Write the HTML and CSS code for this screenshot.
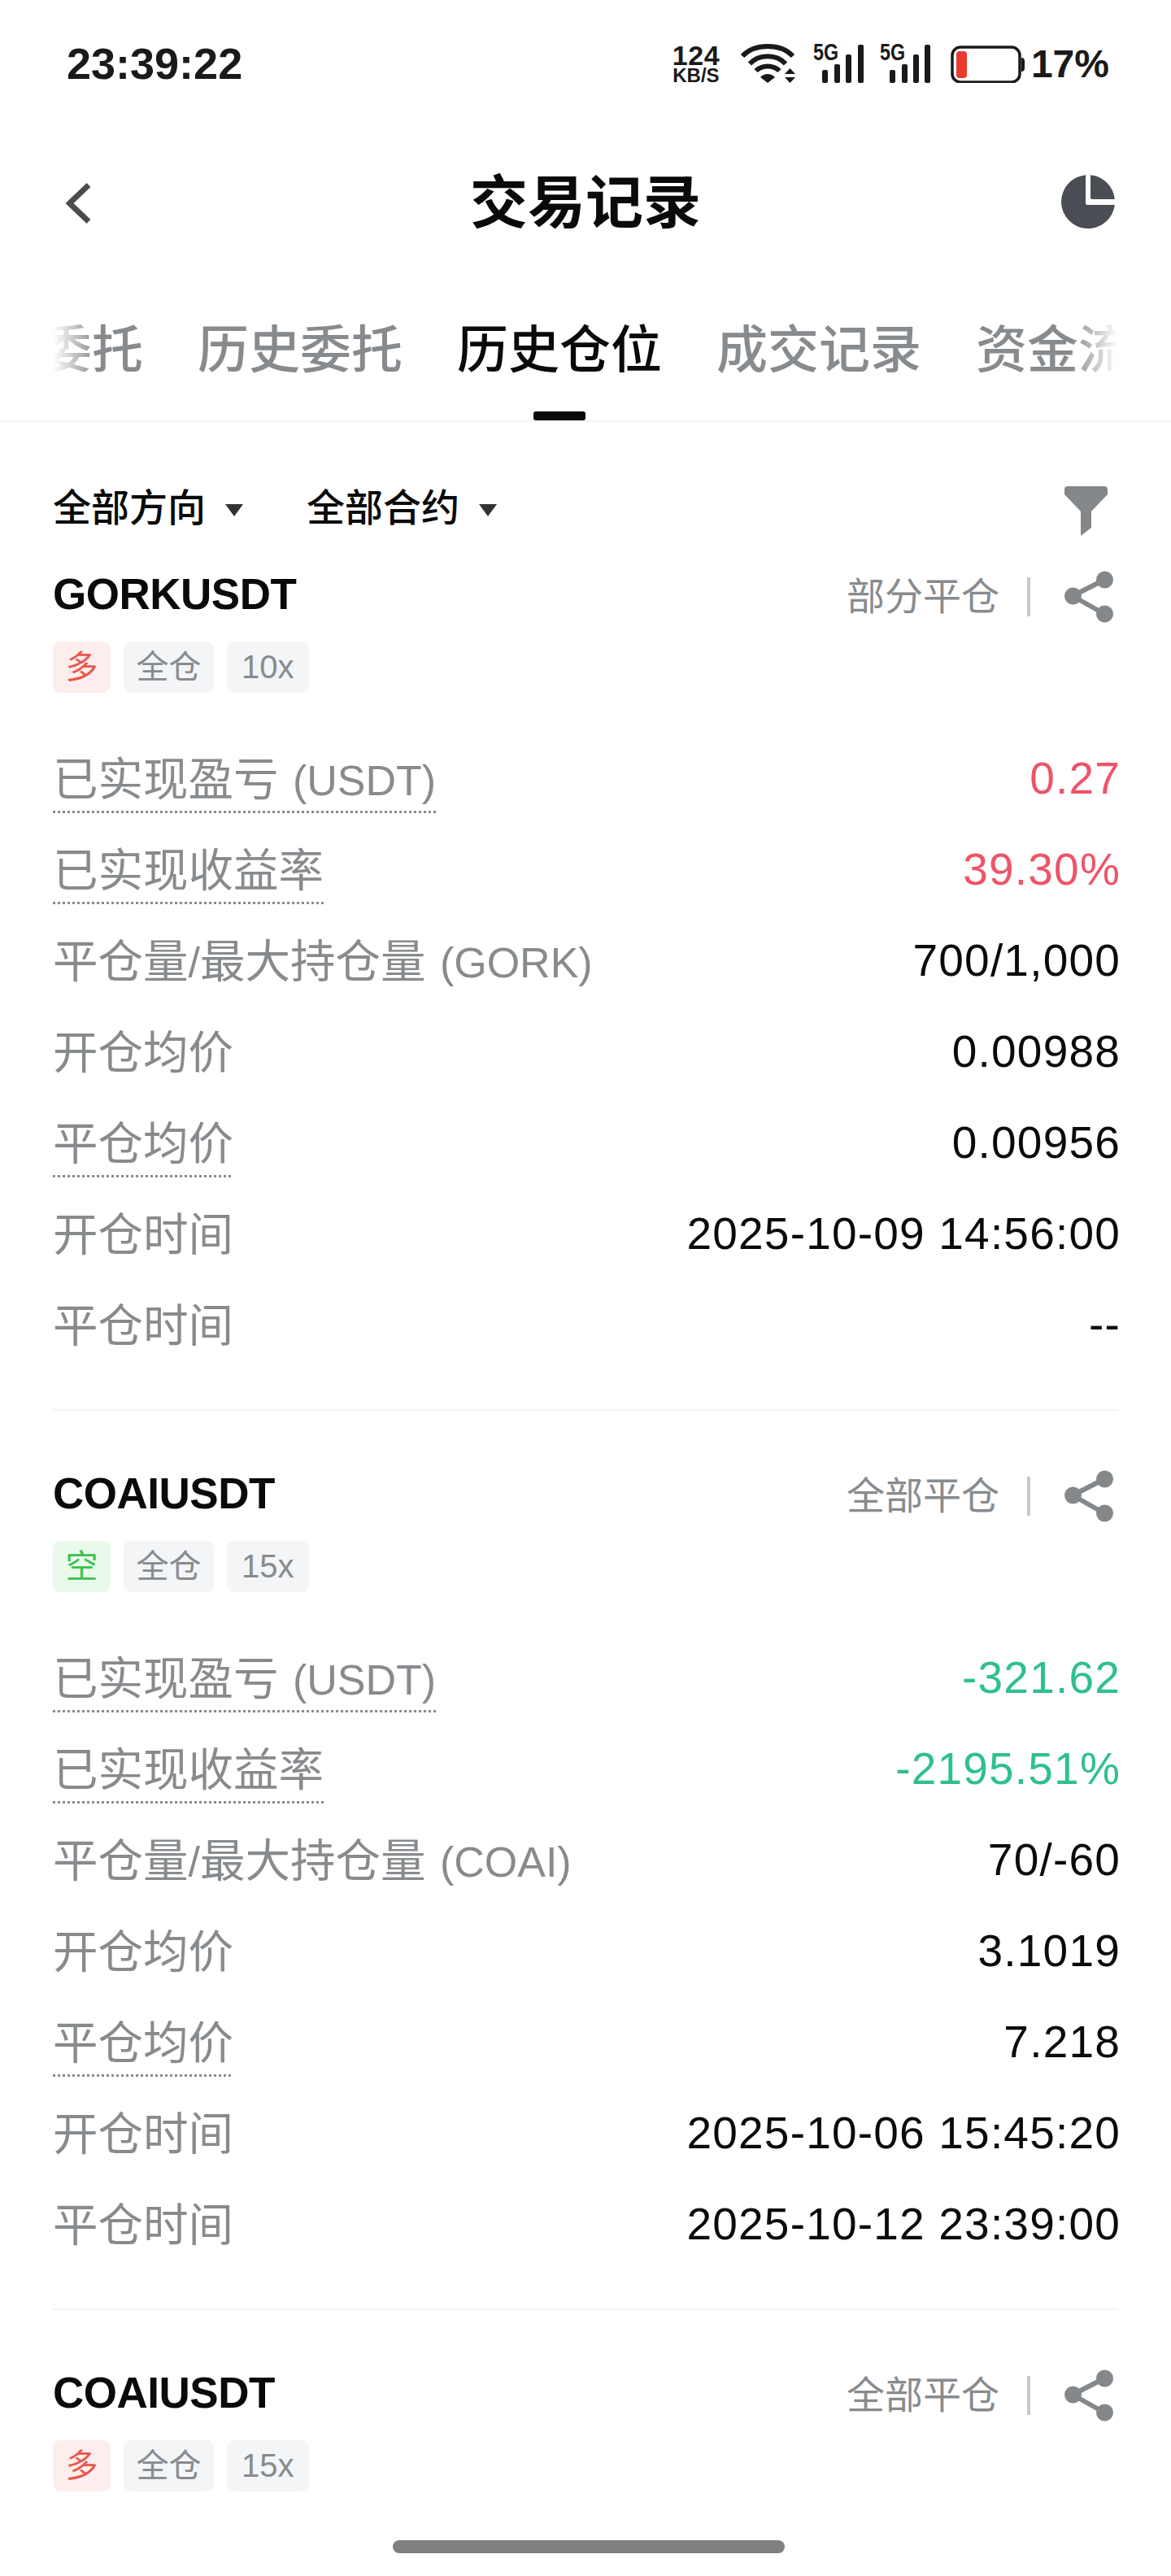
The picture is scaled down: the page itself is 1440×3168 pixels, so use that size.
FILE: index.html
```html
<!DOCTYPE html>
<html>
<head>
    <title>交易记录</title>
    <link rel="stylesheet" href="styles.css">
</head>
<body>
    <div id="page">
        <div class="status-bar">
            <span class="time">23:39:22</span>
            <div class="status-icons">
                <div class="speed"><span class="speed-num">124</span><span class="speed-unit">KB/S</span></div>
                <svg class="wifi" width="72" height="48" viewBox="0 0 72 48">
                    <g fill="none" stroke="#1a1a1a" stroke-width="6">
                        <path d="M6 15C21 -1 53 -1 68 15"/>
                        <path d="M15 24.500C26 12 48 12 59 24.500"/>
                        <path d="M22.500 33C30 25.500 44 25.500 51.500 33"/>
                    </g>
                    <path d="M37 48L28 41C33 35.500 41 35.500 46 41Z" fill="#1a1a1a"/>
                    <path d="M58 37L64.500 30L71 37ZM58 41H71L64.500 48Z" fill="#1a1a1a"/>
                </svg>
                <svg class="signal" width="63" height="56" viewBox="-1 -8 63 56">
                    <text class="net" x="0" y="20" textLength="31" lengthAdjust="spacingAndGlyphs">5G</text>
                    <rect x="11" y="32" width="7" height="16" rx="2"/>
                    <rect x="26" y="25" width="7" height="23" rx="2"/>
                    <rect x="40" y="13" width="7" height="35" rx="2"/>
                    <rect x="55" y="1" width="7" height="47" rx="2"/>
                </svg>
                <svg class="signal" width="63" height="56" viewBox="0 -8 63 56">
                    <text class="net" x="0" y="20" textLength="31" lengthAdjust="spacingAndGlyphs">5G</text>
                    <rect x="12" y="32" width="7" height="16" rx="2"/>
                    <rect x="27" y="25" width="7" height="23" rx="2"/>
                    <rect x="41" y="13" width="7" height="35" rx="2"/>
                    <rect x="55" y="1" width="7" height="47" rx="2"/>
                </svg>
                <svg class="battery" width="95" height="48" viewBox="0 0 95 48">
                    <rect x="6" y="4" width="83" height="43" rx="10" fill="none" stroke="#1a1a1a" stroke-width="3.500"/>
                    <path d="M91 17C94 17 95 19 95 21V30C95 32 94 34 91 34Z" fill="#1a1a1a"/>
                    <rect x="11" y="9" width="13" height="33" rx="4" fill="#ea3a2e"/>
                </svg>
                <span class="percent">17%</span>
            </div>
        </div>

        <div class="nav">
            <svg class="back" width="32" height="52" viewBox="0 0 32 52">
                <path d="M28 3.500L4.500 26L28 48.500" fill="none" stroke="#4a4c50" stroke-width="7"/>
            </svg>
            <h1>交易记录</h1>
            <svg class="pie" width="66" height="66" viewBox="0 0 66 66">
                <path d="M30 .2A33 33 0 1 0 65.800 37H32Q30 37 30 35Z" fill="#4a4d53"/>
                <path d="M36 .2A33 33 0 0 1 65.800 30H38Q36 30 36 28Z" fill="#4a4d53"/>
            </svg>
        </div>

        <div class="tabs">
            <div class="tab-track">
                <div class="tab-list">
                    <div class="tab">当前委托</div>
                    <div class="tab">历史委托</div>
                    <div class="tab active">历史仓位</div>
                    <div class="tab">成交记录</div>
                    <div class="tab">资金流水</div>
                </div>
            </div>
        </div>

        <div class="filters">
            <div class="filter-group">
                <div class="filter">全部方向<i class="caret"></i></div>
                <div class="filter">全部合约<i class="caret"></i></div>
            </div>
            <svg class="funnel" width="53" height="61" viewBox="0 0 53 61">
                <path d="M4 0H49Q53 0 53 4V10L33 31V51L20 61V31L0 10V4Q0 0 4 0Z" fill="#85888b"/>
            </svg>
        </div>

        <!-- 第一条 -->
        <div class="card">
            <div class="card-head">
                <span class="symbol">GORKUSDT</span>
                <div class="card-side">
                    <span class="close-state">部分平仓</span>
                    <i class="side-line"></i>
                    <svg class="share" width="60" height="64" viewBox="0 0 60 64"><use href="#share-icon"/></svg>
                </div>
            </div>
            <div class="tags">
                <span class="tag long">多</span>
                <span class="tag">全仓</span>
                <span class="tag lev">10x</span>
            </div>
            <div class="row"><span class="label tip">已实现盈亏 <span class="unit">(USDT)</span></span><span class="value up">0.27</span></div>
            <div class="row"><span class="label tip">已实现收益率</span><span class="value up">39.30%</span></div>
            <div class="row"><span class="label">平仓量<span class="unit">/</span>最大持仓量 <span class="unit">(GORK)</span></span><span class="value">700/1,000</span></div>
            <div class="row"><span class="label">开仓均价</span><span class="value">0.00988</span></div>
            <div class="row"><span class="label tip">平仓均价</span><span class="value">0.00956</span></div>
            <div class="row"><span class="label">开仓时间</span><span class="value">2025-10-09 14:56:00</span></div>
            <div class="row"><span class="label">平仓时间</span><span class="value">--</span></div>
        </div>

        <!-- 第二条 -->
        <div class="card">
            <div class="card-head">
                <span class="symbol">COAIUSDT</span>
                <div class="card-side">
                    <span class="close-state">全部平仓</span>
                    <i class="side-line"></i>
                    <svg class="share" width="60" height="64" viewBox="0 0 60 64"><use href="#share-icon"/></svg>
                </div>
            </div>
            <div class="tags">
                <span class="tag short">空</span>
                <span class="tag">全仓</span>
                <span class="tag lev">15x</span>
            </div>
            <div class="row"><span class="label tip">已实现盈亏 <span class="unit">(USDT)</span></span><span class="value down">-321.62</span></div>
            <div class="row"><span class="label tip">已实现收益率</span><span class="value down">-2195.51%</span></div>
            <div class="row"><span class="label">平仓量<span class="unit">/</span>最大持仓量 <span class="unit">(COAI)</span></span><span class="value">70/-60</span></div>
            <div class="row"><span class="label">开仓均价</span><span class="value">3.1019</span></div>
            <div class="row"><span class="label tip">平仓均价</span><span class="value">7.218</span></div>
            <div class="row"><span class="label">开仓时间</span><span class="value">2025-10-06 15:45:20</span></div>
            <div class="row"><span class="label">平仓时间</span><span class="value">2025-10-12 23:39:00</span></div>
        </div>

        <!-- 第三条，只露出头部 -->
        <div class="card last">
            <div class="card-head">
                <span class="symbol">COAIUSDT</span>
                <div class="card-side">
                    <span class="close-state">全部平仓</span>
                    <i class="side-line"></i>
                    <svg class="share" width="60" height="64" viewBox="0 0 60 64"><use href="#share-icon"/></svg>
                </div>
            </div>
            <div class="tags">
                <span class="tag long">多</span>
                <span class="tag">全仓</span>
                <span class="tag lev">15x</span>
            </div>
        </div>

        <div class="home-bar"></div>
    </div>

    <svg class="defs" width="0" height="0">
        <symbol id="share-icon" viewBox="0 0 60 64">
            <path d="M49 11L10 31L49 53" fill="none" stroke="#85888b" stroke-width="6"/>
            <circle cx="49.500" cy="11" r="10.500" fill="#85888b"/>
            <circle cx="10.500" cy="31" r="10.500" fill="#85888b"/>
            <circle cx="49.500" cy="53" r="10.500" fill="#85888b"/>
        </symbol>
    </svg>
</body>
</html>
```

FILE: styles.css
```css
:root {
    --text-color: #0a0a0a;
    --gray-color: #888b8e;
    --line-color: #f2f3f4;
    --up-color: #ee5468;
    --down-color: #2fc08d;
}

* {
    box-sizing: border-box;
}

body {
    margin: 0;
    background-color: white;
    color: var(--text-color);
    font-family: "Liberation Sans", "Noto Sans CJK SC", sans-serif;
}

#page {
    position: relative;
    width: 1440px;
    height: 3168px;
    overflow: hidden;
}

.defs {
    position: absolute;
}

/* 状态栏 */
.status-bar {
    height: 156px;
    padding: 0 76px 0 82px;
    display: flex;
    align-items: center;
    justify-content: space-between;
}

.time {
    font-size: 54px;
    font-weight: 700;
    color: #1a1a1a;
}

.status-icons {
    display: flex;
    align-items: center;
    gap: 20px;
    color: #1a1a1a;
}

.speed {
    width: 62px;
    display: flex;
    flex-direction: column;
    align-items: center;
    font-weight: 700;
}

.speed-num {
    font-size: 34px;
    line-height: 30px;
    letter-spacing: 0.6px;
}

.speed-unit {
    font-size: 24px;
    line-height: 20px;
}

.signal {
    margin-top: -8px;
}

.signal rect {
    fill: #1a1a1a;
}

.net {
    font-size: 29px;
    font-weight: 700;
    fill: #1a1a1a;
}

.percent {
    margin-left: -12px;
    font-size: 48px;
    font-weight: 700;
}

/* 标题 */
.nav {
    height: 184px;
    padding: 0 68px;
    display: grid;
    grid-template-columns: 1fr auto 1fr;
    align-items: center;
}

.nav h1 {
    margin: 0 0 10px;
    font-size: 71px;
    font-weight: 700;
}

.back {
    margin: 3px 0 0 13px;
}

.pie {
    justify-self: end;
    margin-right: 1px;
}

/* 标签页 */
.tabs {
    border-bottom: 2px solid var(--line-color);
}

.tab-track {
    height: 177px;
    overflow: hidden;
    -webkit-mask-image: linear-gradient(to right, transparent 65px, black 118px, black 1318px, transparent 1375px);
    mask-image: linear-gradient(to right, transparent 65px, black 118px, black 1318px, transparent 1375px);
}

.tab-list {
    margin-left: -76px;
    display: flex;
    gap: 67px;
}

.tab {
    position: relative;
    flex-shrink: 0;
    height: 177px;
    padding-top: 50px;
    font-size: 63px;
    font-weight: 500;
    line-height: 80px;
    color: var(--gray-color);
}

.tab.active {
    color: var(--text-color);
}

.tab.active::after {
    content: "";
    position: absolute;
    left: 94px;
    bottom: 0;
    width: 64px;
    height: 11px;
    border-radius: 3px;
    background-color: var(--text-color);
}

/* 筛选 */
.filters {
    height: 183px;
    padding: 76px 78px 0 65px;
    display: flex;
    justify-content: space-between;
    align-items: flex-start;
}

.filter-group {
    display: flex;
    gap: 78px;
}

.filter {
    display: flex;
    align-items: center;
    gap: 24px;
    font-size: 47px;
    font-weight: 500;
    line-height: 60px;
}

.caret {
    width: 0;
    height: 0;
    margin-top: 5px;
    border-left: 11.5px solid transparent;
    border-right: 11.5px solid transparent;
    border-top: 15px solid #333;
}

.funnel {
    margin-top: 3px;
}

/* 仓位卡片 */
.card {
    margin: 0 65px 73px;
    padding-bottom: 46px;
    border-bottom: 2px solid var(--line-color);
}

.card.last {
    border-bottom: none;
}

.card-head {
    height: 64px;
    display: flex;
    align-items: center;
    justify-content: space-between;
}

.symbol {
    margin-bottom: 7px;
    font-size: 53px;
    font-weight: 700;
    letter-spacing: -0.5px;
}

.card-side {
    display: flex;
    align-items: center;
}

.close-state {
    margin-bottom: 9px;
    font-size: 47px;
    color: var(--gray-color);
}

.side-line {
    width: 4px;
    height: 48px;
    margin: 0 42px 0 34px;
    background-color: #c6c8c9;
}

.share {
    margin-right: 6px;
}

.tags {
    margin: 23px 0 51px;
    display: flex;
    gap: 16px;
}

.tag {
    height: 63px;
    padding: 0 15.5px;
    border-radius: 9px;
    background-color: #f3f5f7;
    color: var(--gray-color);
    font-size: 40px;
    line-height: 63px;
}

.tag.lev {
    padding: 0 18px;
}

.tag.long {
    background-color: #fdeeed;
    color: #e8574e;
}

.tag.short {
    background-color: #e9f9ea;
    color: #3bc14f;
}

.row {
    height: 112px;
    display: flex;
    align-items: center;
    justify-content: space-between;
}

.label {
    margin-bottom: 10px;
    font-size: 55.5px;
    word-spacing: 2px;
    color: var(--gray-color);
}

.unit {
    font-size: 52px;
}

.tip {
    text-decoration: underline dotted var(--gray-color) 3px;
    text-decoration-skip-ink: none;
    text-underline-offset: 19px;
}

.value {
    margin: -4px -3px 0 0;
    font-size: 55px;
    letter-spacing: 1.2px;
}

.value.up {
    color: var(--up-color);
}

.value.down {
    color: var(--down-color);
}

.home-bar {
    position: absolute;
    left: 483px;
    top: 3124px;
    width: 482px;
    height: 16px;
    border-radius: 8px;
    background-color: #808080;
}
```
